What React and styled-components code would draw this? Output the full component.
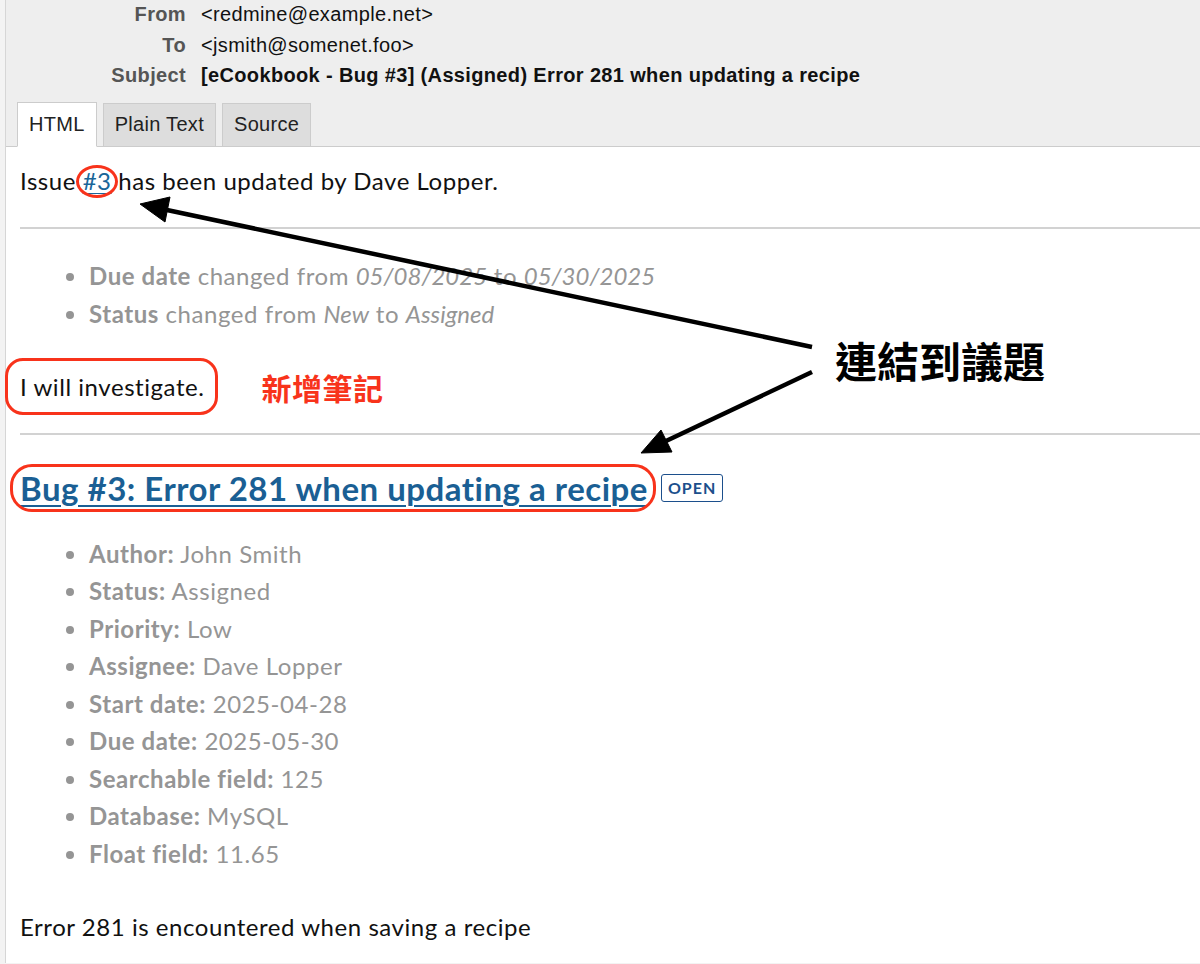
import React from "react";
import styled, { createGlobalStyle } from "styled-components";

const GlobalStyle = createGlobalStyle`
  html, body {
    margin: 0;
    padding: 0;
    background: #f3f3f3;
  }
  body {
    font-family: "Liberation Sans", Arial, sans-serif;
  }
`;

const headers = [
  { label: "From", value: "<redmine@example.net>" },
  { label: "To", value: "<jsmith@somenet.foo>" },
  {
    label: "Subject",
    value: "[eCookbook - Bug #3] (Assigned) Error 281 when updating a recipe",
    strong: true,
  },
];

const tabs = ["HTML", "Plain Text", "Source"];

const details = [
  ["Author", "John Smith"],
  ["Status", "Assigned"],
  ["Priority", "Low"],
  ["Assignee", "Dave Lopper"],
  ["Start date", "2025-04-28"],
  ["Due date", "2025-05-30"],
  ["Searchable field", "125"],
  ["Database", "MySQL"],
  ["Float field", "11.65"],
];

const App = () => {
  return (
    <Wrapper>
      <GlobalStyle />
      <Page>
        <MailHeader>
          <Fields>
            {headers.map((h) => (
              <React.Fragment key={h.label}>
                <Label>{h.label}</Label>
                <Value $strong={h.strong}>{h.value}</Value>
              </React.Fragment>
            ))}
          </Fields>
          <Tabs>
            {tabs.map((t, i) => (
              <Tab key={t} $active={i === 0}>
                {t}
              </Tab>
            ))}
          </Tabs>
        </MailHeader>

        <Content>
          <Intro>
            Issue <IssueLink>#3</IssueLink> has been updated by Dave Lopper.
          </Intro>
          <Rule />
          <Changes>
            <li>
              <b>Due date</b> changed from <i>05/08/2025</i> to <i>05/30/2025</i>
            </li>
            <li>
              <b>Status</b> changed from <i>New</i> to <i>Assigned</i>
            </li>
          </Changes>
          <Notes>
            <Boxed $l={15} $r={14} $t={11} $b={10} $radius={18}>
              I will investigate.
            </Boxed>
            <NoteTag>新增筆記</NoteTag>
          </Notes>
          <Rule />
          <Title>
            <Boxed $l={10} $r={8} $t={4} $b={4} $radius={22}>
              <TitleLink>Bug #3: Error 281 when updating a recipe</TitleLink>
            </Boxed>
            <Badge>Open</Badge>
          </Title>
          <Attributes>
            {details.map(([k, v]) => (
              <li key={k}>
                <b>{k}:</b> {v}
              </li>
            ))}
          </Attributes>
          <Description>Error 281 is encountered when saving a recipe</Description>
        </Content>
      </Page>

      <Callout>連結到議題</Callout>
      <Arrows width="1200" height="964" viewBox="0 0 1200 964">
        <g fill="#000" stroke="#000" strokeWidth="4.5" strokeLinecap="butt">
          <line x1="812" y1="347" x2="167" y2="210" />
          <polygon points="140,204 170,197 165,222" strokeWidth="1" />
          <line x1="812" y1="372" x2="666" y2="441" />
          <polygon points="641,453 672,452 661,430" strokeWidth="1" />
        </g>
      </Arrows>
    </Wrapper>
  );
};

const Wrapper = styled.div`
  position: relative;
  width: 1200px;
  height: 964px;
  overflow: hidden;
`;
const Page = styled.div`
  margin-left: 5px;
  border-left: 1px solid #d6d6d6;
  background: #fff;
  height: 100%;
`;
const MailHeader = styled.div`
  background: #eeeeee;
  border-bottom: 1px solid #cccccc;
`;
const Fields = styled.div`
  display: grid;
  grid-template-columns: 180px 1fr;
  column-gap: 15px;
  font-size: 20px;
  letter-spacing: 0.35px;
  line-height: 30.5px;
  margin-top: -1px;
`;
const Label = styled.div`
  text-align: right;
  font-weight: bold;
  color: #555;
`;
const Value = styled.div`
  color: #111;
  font-weight: ${(p) => (p.$strong ? "bold" : "normal")};
`;
const Tabs = styled.div`
  display: flex;
  gap: 6px;
  padding-left: 11px;
  margin-top: 11px;
  margin-bottom: -1px;
`;
const Tab = styled.div`
  box-sizing: border-box;
  padding: 0 11px;
  display: flex;
  align-items: center;
  font-size: 20px;
  letter-spacing: 0.3px;
  color: #222;
  background: ${(p) => (p.$active ? "#fff" : "#dddddd")};
  border: 1px solid #cccccc;
  border-bottom-color: ${(p) => (p.$active ? "#fff" : "#cccccc")};
  margin-top: ${(p) => (p.$active ? "0" : "1px")};
  height: ${(p) => (p.$active ? "45px" : "44px")};
`;
const Content = styled.div`
  padding-left: 14px;
  font-family: "Lato", "Noto Sans", sans-serif;
  font-size: 24px;
  letter-spacing: 0.55px;
  color: #111;
  i {
    font-style: italic;
    letter-spacing: 0;
  }
`;
const Intro = styled.p`
  margin: 0;
  padding-top: 16px;
  line-height: 36px;
`;
const IssueLink = styled.span`
  position: relative;
  color: #1a6699;
  text-decoration: underline;
  text-decoration-thickness: 1px;
  text-underline-offset: 3px;
  &::after {
    content: "";
    position: absolute;
    left: -7px;
    right: -6px;
    top: -1px;
    bottom: -3px;
    border: 3px solid #f8331b;
    border-radius: 50%;
  }
`;
const Rule = styled.hr`
  border: 0;
  border-top: 2px solid #d2d2d2;
  margin: 28px 0 0 0;
`;
const Changes = styled.ul`
  margin: 28px 0 0 0;
  padding-left: 69px;
  color: #959595;
  line-height: 38px;
`;
const Notes = styled.p`
  margin: 36px 0 0 0;
  line-height: 36px;
  display: flex;
  align-items: center;
`;
const Boxed = styled.span`
  position: relative;
  display: inline-block;
  &::after {
    content: "";
    position: absolute;
    left: -${(p) => p.$l}px;
    right: -${(p) => p.$r}px;
    top: -${(p) => p.$t}px;
    bottom: -${(p) => p.$b}px;
    border: 3px solid #f8331b;
    border-radius: ${(p) => p.$radius}px;
    pointer-events: none;
  }
`;
const NoteTag = styled.span`
  margin-left: 57px;
  font-family: "Noto Sans CJK TC", "Noto Sans CJK SC", sans-serif;
  font-weight: bold;
  font-size: 30px;
  letter-spacing: 0.5px;
  color: #f8331b;
`;
const Title = styled.h3`
  margin: 33px 0 0 0;
  display: flex;
  align-items: center;
  gap: 13px;
  line-height: 40px;
  font-size: 33px;
  letter-spacing: 0.5px;
  font-weight: bold;
`;
const TitleLink = styled.span`
  color: #1a5f94;
  text-decoration: underline;
  text-decoration-thickness: 2px;
  text-underline-offset: 4px;
`;
const Badge = styled.span`
  display: inline-flex;
  align-items: center;
  height: 28px;
  box-sizing: border-box;
  padding: 0 6px;
  border: 1px solid #1c4f8c;
  border-radius: 3px;
  color: #1c4f8c;
  font-size: 16px;
  line-height: 1;
  text-transform: uppercase;
  letter-spacing: 1px;
`;
const Attributes = styled.ul`
  margin: 27px 0 0 0;
  padding-left: 69px;
  color: #959595;
  line-height: 37.5px;
`;
const Description = styled.p`
  margin: 37px 0 0 0;
  line-height: 36px;
`;
const Callout = styled.div`
  position: absolute;
  left: 835px;
  top: 336px;
  font-family: "Noto Sans CJK TC", "Noto Sans CJK SC", sans-serif;
  font-weight: bold;
  font-size: 42px;
  line-height: 48px;
  color: #000;
`;
const Arrows = styled.svg`
  position: absolute;
  left: 0;
  top: 0;
  pointer-events: none;
`;

export default App;
